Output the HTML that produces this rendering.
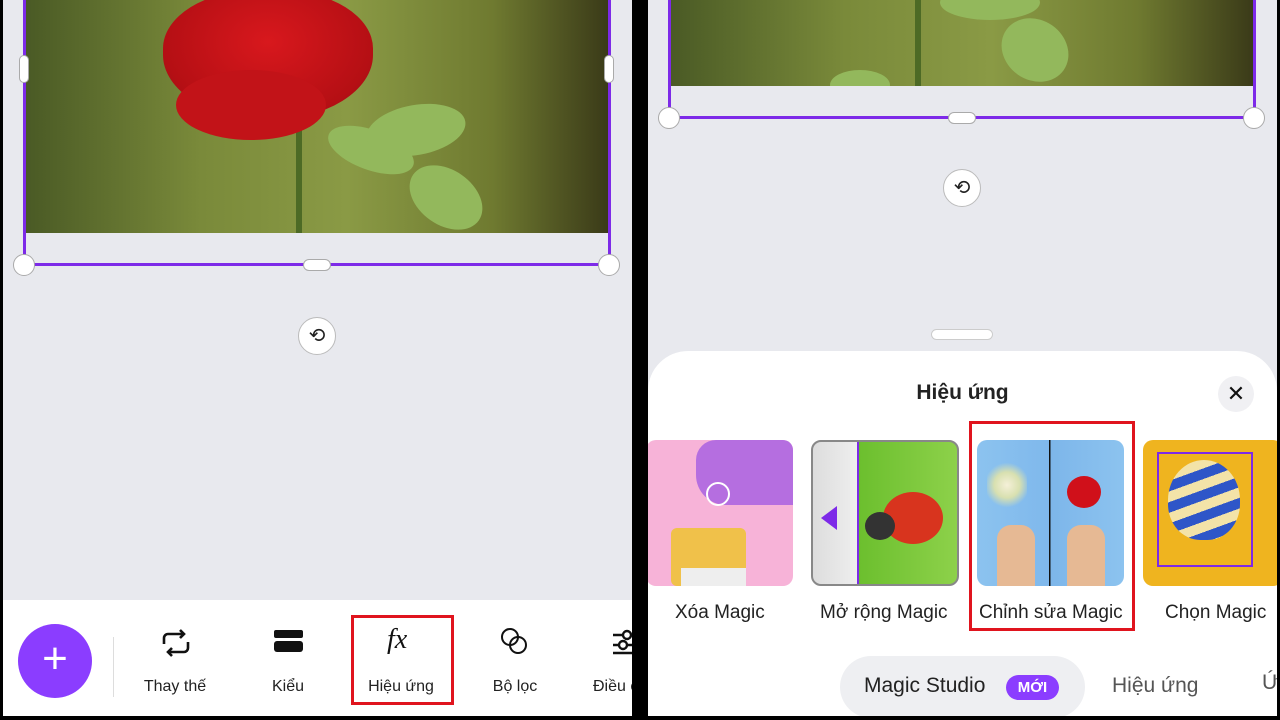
<!DOCTYPE html>
<html><head><meta charset="utf-8"><style>
*{margin:0;padding:0;box-sizing:border-box}
body{width:1280px;height:720px;background:#000;position:relative;overflow:hidden;font-family:"Liberation Sans","Noto Sans CJK SC",sans-serif}
.abs{position:absolute}
.panel{position:absolute;top:0;height:716px;background:#e8e9ee;overflow:hidden}
.photo{position:absolute;background:linear-gradient(90deg,#4a5a25,#7a8a3a 30%,#8a9a45 55%,#6f7a30 80%,#3a3a18);overflow:hidden}
.circ{position:absolute;width:22px;height:22px;border-radius:50%;background:#fff;border:1px solid #aaa}
.pillh{position:absolute;width:28px;height:12px;border-radius:6px;background:#fff;border:1px solid #aaa}
.pillv{position:absolute;width:10px;height:28px;border-radius:5px;background:#fff;border:1px solid #aaa}
.rot{position:absolute;width:38px;height:38px;border-radius:50%;background:#fff;border:1px solid #bbb;font-size:20px;text-align:center;line-height:36px;color:#222}
.lbl{position:absolute;font-size:16px;color:#222;text-align:center;width:120px}
.thumb{position:absolute;top:440px;height:146px;border-radius:10px;overflow:hidden}
.tl{position:absolute;top:602px;font-size:19px;color:#222;white-space:nowrap}
.leaf{position:absolute;background:#93b85c;border-radius:50%}
</style></head><body>

<!-- LEFT PANEL -->
<div class="panel" style="left:3px;width:629px">
  <div class="photo" style="left:23px;top:0;width:583px;height:233px">
    <div class="abs" style="left:270px;top:120px;width:6px;height:113px;background:#4d6a25"></div>
    <div class="leaf" style="left:300px;top:130px;width:90px;height:40px;transform:rotate(20deg)"></div>
    <div class="leaf" style="left:340px;top:105px;width:100px;height:50px;transform:rotate(-10deg)"></div>
    <div class="leaf" style="left:380px;top:170px;width:80px;height:55px;transform:rotate(35deg)"></div>
    <div class="abs" style="left:137px;top:-10px;width:210px;height:130px;border-radius:45% 45% 50% 50%;background:radial-gradient(ellipse at 50% 40%,#d8181d,#b50f14 70%,#8c0c10)"></div>
    <div class="abs" style="left:150px;top:70px;width:150px;height:70px;border-radius:50%;background:#c21318"></div>
  </div>
  <div class="abs" style="left:20px;top:0;width:3px;height:265px;background:#7d2ae8"></div>
  <div class="abs" style="left:605px;top:0;width:3px;height:265px;background:#7d2ae8"></div>
  <div class="abs" style="left:20px;top:263px;width:588px;height:3px;background:#7d2ae8"></div>
  <div class="pillv" style="left:16px;top:55px"></div>
  <div class="pillv" style="left:601px;top:55px"></div>
  <div class="circ" style="left:10px;top:254px"></div>
  <div class="circ" style="left:595px;top:254px"></div>
  <div class="pillh" style="left:300px;top:259px"></div>
  <div class="rot" style="left:295px;top:317px">⟲</div>
  <!-- toolbar -->
  <div class="abs" style="left:0;top:600px;width:629px;height:116px;background:#fff"></div>
  <div class="abs" style="left:15px;top:624px;width:74px;height:74px;border-radius:50%;background:#8b3dff;color:#fff;font-size:44px;line-height:70px;text-align:center;font-weight:300">+</div>
  <div class="abs" style="left:110px;top:637px;width:1px;height:60px;background:#ddd"></div>
  <svg class="abs" style="left:155px;top:626px" width="36" height="34" viewBox="0 0 36 34"><path d="M6 18 V12 a4 4 0 0 1 4-4 H26 M22 4 l4 4 -4 4 M30 16 v6 a4 4 0 0 1 -4 4 H10 M14 30 l-4-4 4-4" fill="none" stroke="#111" stroke-width="2.6"/></svg>
  <div class="lbl" style="left:112px;top:678px">Thay thế</div>
  <div class="abs" style="left:271px;top:630px;width:29px;height:8px;border-radius:2px;background:#111"></div>
  <div class="abs" style="left:271px;top:641px;width:29px;height:11px;border-radius:3px;background:#111"></div>
  <div class="lbl" style="left:225px;top:678px">Kiểu</div>
  <div class="abs" style="left:384px;top:624px;font-size:28px;font-style:italic;font-family:'Liberation Serif',serif;color:#111">fx</div>
  <div class="lbl" style="left:338px;top:678px">Hiệu ứng</div>
  <div class="abs" style="left:348px;top:615px;width:103px;height:90px;border:3px solid #e0141e"></div>
  <div class="abs" style="left:498px;top:628px;width:18px;height:18px;border-radius:50%;border:2.5px solid #111"></div>
  <div class="abs" style="left:506px;top:636px;width:18px;height:18px;border-radius:50%;border:2.5px solid #111"></div>
  <div class="lbl" style="left:452px;top:678px">Bộ lọc</div>
  <svg class="abs" style="left:610px;top:628px" width="24" height="32"><g stroke="#111" stroke-width="2.4" fill="none"><path d="M0 7H24M0 17H24M0 25H24"/><circle cx="14" cy="7" r="4" fill="#fff"/><circle cx="10" cy="17" r="4" fill="#fff"/></g></svg>
  <div class="lbl" style="left:570px;top:678px;text-align:left;width:80px;padding-left:20px">Điều c</div>
</div>

<!-- RIGHT PANEL -->
<div class="panel" style="left:648px;width:629px">
  <div class="photo" style="left:22px;top:0;width:584px;height:86px">
    <div class="abs" style="left:245px;top:0;width:6px;height:86px;background:#4d6a25"></div>
    <div class="leaf" style="left:330px;top:20px;width:70px;height:60px;transform:rotate(35deg)"></div>
    <div class="leaf" style="left:270px;top:-15px;width:100px;height:35px"></div>
    <div class="leaf" style="left:160px;top:70px;width:60px;height:30px"></div>
  </div>
  <div class="abs" style="left:20px;top:0;width:3px;height:118px;background:#7d2ae8"></div>
  <div class="abs" style="left:605px;top:0;width:3px;height:118px;background:#7d2ae8"></div>
  <div class="abs" style="left:20px;top:116px;width:588px;height:3px;background:#7d2ae8"></div>
  <div class="circ" style="left:10px;top:107px"></div>
  <div class="circ" style="left:595px;top:107px"></div>
  <div class="pillh" style="left:300px;top:112px"></div>
  <div class="rot" style="left:295px;top:169px">⟲</div>
  <div class="abs" style="left:283px;top:329px;width:62px;height:11px;border-radius:6px;background:#fff;border:1px solid #ccc"></div>
  <!-- sheet -->
  <div class="abs" style="left:0;top:351px;width:629px;height:380px;background:#fff;border-radius:40px 40px 0 0"></div>
  <div class="abs" style="left:0;top:381px;width:629px;text-align:center;font-size:21px;color:#222;font-weight:bold">Hiệu ứng</div>
  <div class="abs" style="left:570px;top:376px;width:36px;height:36px;border-radius:50%;background:#f0f0f3;text-align:center;line-height:36px;font-size:22px;color:#111">✕</div>
  <!-- thumbs -->
  <div class="thumb" style="left:-2px;width:147px;background:#f7b3d8">
    <div class="abs" style="left:50px;top:0;width:97px;height:65px;background:#b56ee0;border-radius:20px 0 0 30px"></div>
    <div class="abs" style="left:60px;top:42px;width:24px;height:24px;border-radius:50%;border:2px solid #fff"></div>
    <div class="abs" style="left:25px;top:88px;width:75px;height:58px;background:#f0c14a;border-radius:6px"></div>
    <div class="abs" style="left:35px;top:128px;width:65px;height:18px;background:#eee"></div>
  </div>
  <div class="thumb" style="left:163px;width:148px;border:2px solid #888;background:linear-gradient(90deg,#ddd 0,#eee 44px,#7d2ae8 44px,#7d2ae8 46px,#6cbf2e 46px,#8dd14a)">
    <div class="abs" style="left:70px;top:50px;width:60px;height:52px;border-radius:50%;background:#d8341e"></div>
    <div class="abs" style="left:52px;top:70px;width:30px;height:28px;border-radius:50%;background:#333"></div>
    <div class="abs" style="left:8px;top:64px;width:0;height:0;border:12px solid transparent;border-right:16px solid #7d2ae8;border-left:0"></div>
  </div>
  <div class="thumb" style="left:329px;width:147px;background:linear-gradient(90deg,#8cc3ef,#7fb8ec 49%,#111 49%,#111 50%,#7db6ea 50%,#8cc3ef)">
    <div class="abs" style="left:10px;top:20px;width:40px;height:50px;background:radial-gradient(circle,#f5f0d8 0,#d8e0b0 40%,transparent 70%)"></div>
    <div class="abs" style="left:90px;top:36px;width:34px;height:32px;border-radius:50%;background:#d0101a"></div>
    <div class="abs" style="left:20px;top:85px;width:38px;height:61px;background:#e6b994;border-radius:14px 14px 0 0"></div>
    <div class="abs" style="left:90px;top:85px;width:38px;height:61px;background:#e6b994;border-radius:14px 14px 0 0"></div>
  </div>
  <div class="thumb" style="left:495px;width:140px;background:#efb41f">
    <div class="abs" style="left:14px;top:12px;width:96px;height:115px;border:2px solid #7d2ae8"></div>
    <div class="abs" style="left:25px;top:20px;width:72px;height:80px;border-radius:50% 50% 45% 45%;background:repeating-linear-gradient(160deg,#2e56c8 0 10px,#f3e3a8 10px 20px)"></div>
  </div>
  <div class="tl" style="left:27px">Xóa Magic</div>
  <div class="tl" style="left:172px">Mở rộng Magic</div>
  <div class="tl" style="left:331px">Chỉnh sửa Magic</div>
  <div class="tl" style="left:517px">Chọn Magic</div>
  <div class="abs" style="left:321px;top:421px;width:166px;height:210px;border:3px solid #e0141e"></div>
  <!-- tabs -->
  <div class="abs" style="left:192px;top:656px;width:245px;height:62px;border-radius:31px;background:#eeeff2"></div>
  <div class="abs" style="left:216px;top:674px;font-size:21px;color:#222">Magic Studio</div>
  <div class="abs" style="left:358px;top:675px;width:53px;height:25px;border-radius:13px;background:#8b3dff;color:#fff;font-size:15px;text-align:center;line-height:25px;font-weight:bold">MỚI</div>
  <div class="abs" style="left:464px;top:674px;font-size:21px;color:#555">Hiệu ứng</div>
  <div class="abs" style="left:614px;top:671px;font-size:21px;color:#555">Ứ</div>
</div>
</body></html>
